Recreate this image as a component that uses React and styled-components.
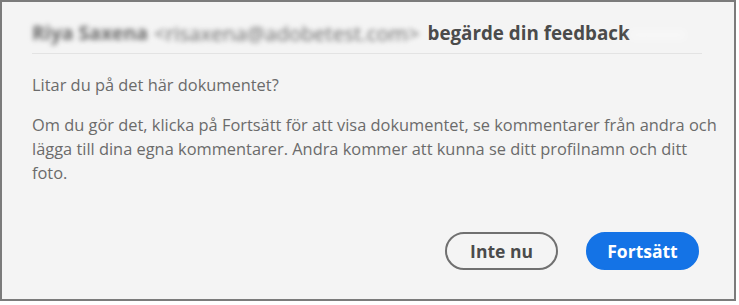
import React from 'react'
import styled, { createGlobalStyle } from 'styled-components'

const GlobalStyle = createGlobalStyle`
  html, body {
    margin: 0;
    padding: 0;
    background: #ffffff;
  }
  body {
    font-family: 'Open Sans', 'Liberation Sans', sans-serif;
  }
`

const Frame = styled.div`
  box-sizing: border-box;
  width: 736px;
  height: 301px;
  border: 2px solid #7b7b7b;
  background: #f4f4f4;
  display: flex;
  flex-direction: column;
  padding: 0 32px 0 30px;
`

const Header = styled.div`
  box-sizing: border-box;
  display: flex;
  align-items: center;
  height: 52px;
  padding-top: 10px;
  border-bottom: 1px solid #e3e3e3;
  color: #4b4b4b;
  white-space: nowrap;
`

const Blurred = styled.span`
  filter: blur(${p => p.$light ? 4 : 2.4}px);
  font-size: ${p => p.$size}px;
  color: ${p => p.$light ? '#ffffff' : '#6a6a6a'};
  font-weight: ${p => p.$bold ? 700 : 400};
  margin-right: 6px;
`

const Strong = styled.span`
  font-size: 18.8px;
  font-weight: 700;
  margin-left: 2px;
`

const Text = styled.p`
  margin: ${p => p.$top}px 0 0;
  font-size: 16.4px;
  line-height: 24px;
  color: #6b6b6b;
  white-space: nowrap;
`

const Actions = styled.div`
  display: flex;
  justify-content: flex-end;
  gap: 28px;
  margin-top: auto;
  margin-bottom: 29px;
  margin-right: 3px;
`

const Button = styled.button`
  box-sizing: border-box;
  width: 113px;
  height: 38px;
  border-radius: 19px;
  font-family: inherit;
  font-size: 17.5px;
  font-weight: 700;
  cursor: pointer;
  border: 2px solid ${p => p.$primary ? '#1473e6' : '#707070'};
  background: ${p => p.$primary ? '#1473e6' : 'transparent'};
  color: ${p => p.$primary ? '#ffffff' : '#4b4b4b'};
`

export default function App() {
  return (
    <>
      <GlobalStyle />
      <Frame>
        <Header>
          <Blurred $bold $size={19.4}>Riya Saxena</Blurred>
          <Blurred $size={20.5}>&lt;risaxena@adobetest.com&gt;</Blurred>
          <Strong>begärde din feedback</Strong>
          <Blurred $light $size={18}>xxxxxx</Blurred>
        </Header>
        <Text $top={19}>Litar du på det här dokumentet?</Text>
        <Text $top={16}>
          Om du gör det, klicka på Fortsätt för att visa dokumentet, se kommentarer från andra och<br />
          lägga till dina egna kommentarer. Andra kommer att kunna se ditt profilnamn och ditt<br />
          foto.
        </Text>
        <Actions>
          <Button>Inte nu</Button>
          <Button $primary>Fortsätt</Button>
        </Actions>
      </Frame>
    </>
  )
}
